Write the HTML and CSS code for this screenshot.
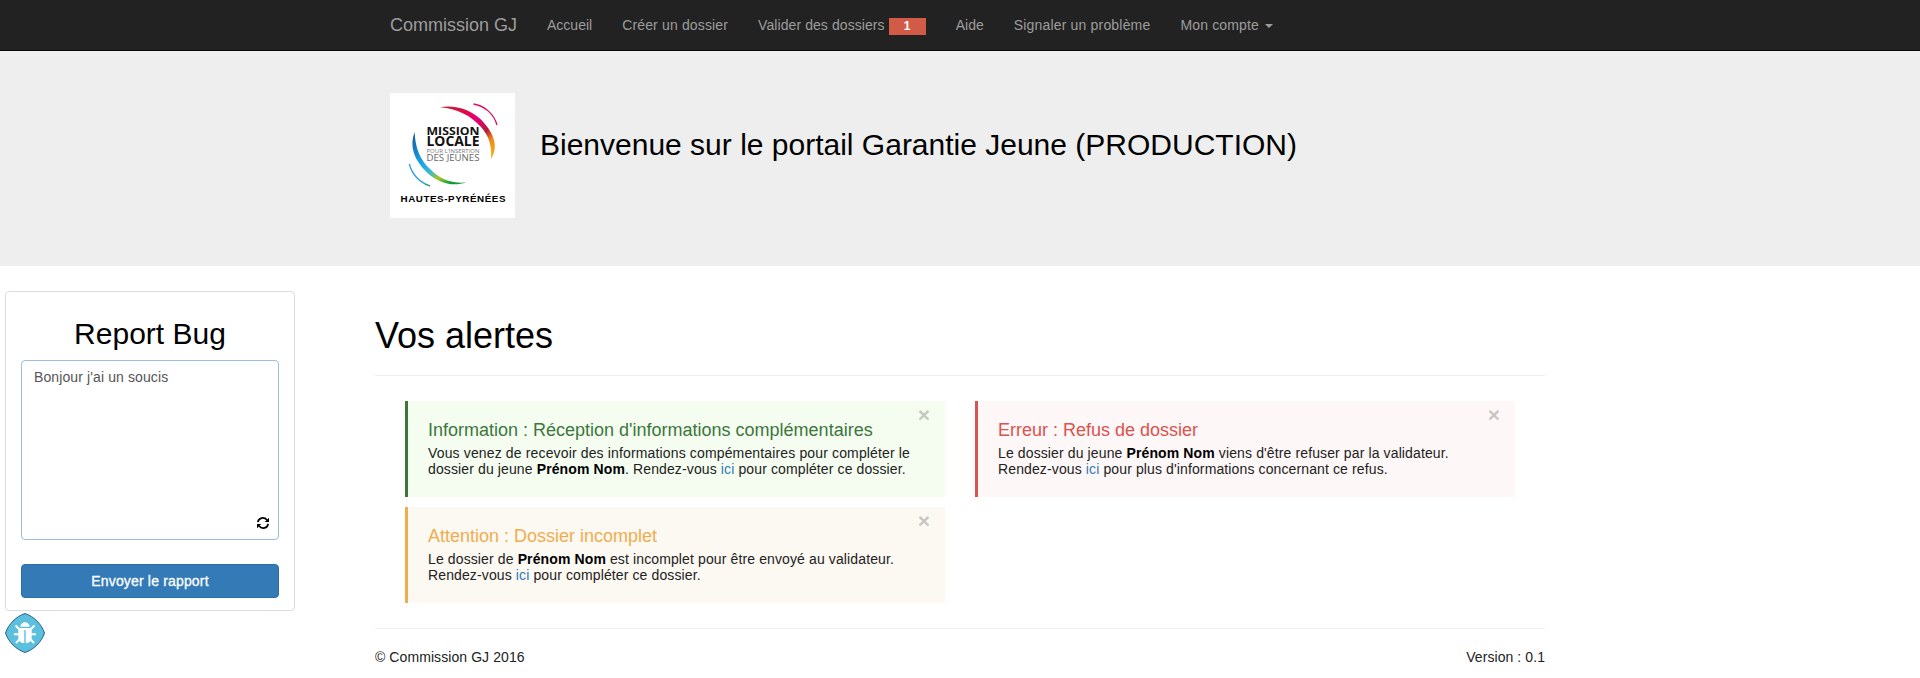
FILE: index.html
```html
<!DOCTYPE html>
<html lang="fr">
<head>
<meta charset="utf-8">
<title>Commission GJ</title>
<link rel="stylesheet" href="styles.css">
</head>
<body>
<nav class="navbar">
  <div class="navbar-inner">
    <a class="brand">Commission GJ</a>
    <a class="nav-link">Accueil</a>
    <a class="nav-link nav-create">Créer un dossier</a>
    <a class="nav-link nav-with-badge">Valider des dossiers <span class="badge">1</span></a>
    <a class="nav-link">Aide</a>
    <a class="nav-link nav-report">Signaler un problème</a>
    <a class="nav-link nav-account">Mon compte <span class="caret"></span></a>
  </div>
</nav>
<header class="jumbotron">
  <div class="jumbotron-inner">
    <svg class="logo" viewBox="0 0 125 125">
      <defs>
        <linearGradient id="warm" gradientUnits="userSpaceOnUse" x1="55" y1="15" x2="103" y2="66">
          <stop offset="0" stop-color="#c5203c"/><stop offset=".25" stop-color="#df0a48"/>
          <stop offset=".42" stop-color="#e5007d"/><stop offset=".64" stop-color="#b61a3c"/>
          <stop offset=".78" stop-color="#f08a18"/><stop offset="1" stop-color="#f6b40e"/>
        </linearGradient>
        <linearGradient id="cool" gradientUnits="userSpaceOnUse" x1="22" y1="45" x2="75" y2="92">
          <stop offset="0" stop-color="#1760a8"/><stop offset=".3" stop-color="#16a0e0"/>
          <stop offset=".5" stop-color="#35b7dc"/><stop offset=".66" stop-color="#a4c520"/>
          <stop offset=".82" stop-color="#0ba03c"/><stop offset="1" stop-color="#188a35"/>
        </linearGradient>
      </defs>
      <rect width="125" height="125" fill="#fff"/>
      <path fill="url(#warm)" d="M50 14.200 C66 11.500 81 17 91 26.500 C102 38 110 52 101 66 C102 55 100 44 91 34 C80 22 67 15.500 50 14.200Z"/>
      <path d="M83.500 11 C95 13 104 21 107 32" fill="none" stroke="#dc0c62" stroke-width="1.300"/>
      <path fill="url(#cool)" d="M24.700 39 C25 54 30 67 40 76 C50 86 60 90.500 76 89.500 C62 94 48 90 37 79.500 C24 67 19 53 24.700 39Z"/>
      <path d="M19.300 71 C22 81 29 89 40 93" fill="none" stroke="#279fe2" stroke-width="1.300"/>
      <path d="M35 91 L40 93" fill="none" stroke="#39a34c" stroke-width="1.300"/>
      <g font-family="Open Sans, sans-serif">
        <text x="36.500" y="42" font-size="11" font-weight="700" textLength="53" lengthAdjust="spacingAndGlyphs" fill="#111">MISSION</text>
        <text x="36.500" y="53.300" font-size="13.500" font-weight="700" textLength="53" lengthAdjust="spacingAndGlyphs" fill="#111">LOCALE</text>
        <text x="36.500" y="59.500" font-size="5.500" textLength="53" lengthAdjust="spacingAndGlyphs" fill="#777">POUR L'INSERTION</text>
        <text x="36.500" y="67.500" font-size="9" textLength="53" lengthAdjust="spacingAndGlyphs" fill="#666">DES JEUNES</text>
      </g>
      <text x="10.500" y="109" font-family="Liberation Sans, sans-serif" font-size="9.800" font-weight="700" textLength="105" lengthAdjust="spacing" fill="#000">HAUTES-PYRÉNÉES</text>
    </svg>
    <h2 class="welcome">Bienvenue sur le portail Garantie Jeune (PRODUCTION)</h2>
  </div>
</header>
<div class="page">
  <aside class="sidebar">
    <section class="bug-panel">
      <h2 class="bug-title">Report Bug</h2>
      <div class="bug-text">
        <span>Bonjour j'ai un soucis</span>
        <svg class="refresh" viewBox="0 0 12 12">
          <g fill="none" stroke="#000" stroke-width="1.700">
            <path d="M.9 5.200 C1.400 0.800 7 -.6 10 3"/>
            <path d="M11.100 6.800 C10.600 11.200 5 12.600 2 9"/>
          </g>
          <path d="M12 .7V5H7.700Z M0 11.300V7H4.300Z"/>
        </svg>
      </div>
      <button class="bug-send">Envoyer le rapport</button>
    </section>
    <svg class="bug-toggle" viewBox="0 0 40 40">
      <path d="M20 .5 C29 3.500 36.500 11 39.500 20 C36.500 29 29 36.500 20 39.500 C11 36.500 3.500 29 .5 20 C3.500 11 11 3.500 20 .5Z" fill="#5bc0de" stroke="#286090"/>
      <path d="M15.300 13.800 C15.600 7.600 24.400 7.600 24.700 13.800Z M13.300 14.900H26.700V24 C26.700 28 24.500 30 20.700 30.200V17H19.300V30.200C15.500 30 13.300 28 13.300 24Z" fill="#fff"/>
      <path d="M10.500 12.500 L14 16 M29.500 12.500 L26 16 M9 21.200H14 M31 21.200H26 M11 30 L14.700 26 M29 30 L25.300 26" stroke="#fff" stroke-width="1.900" fill="none"/>
    </svg>
  </aside>
  <main class="content">
    <h1 class="heading">Vos alertes</h1>
    <div class="alerts">
      <article class="alert success">
        <span class="close">×</span>
        <h4>Information : Réception d'informations complémentaires</h4>
        <p><span class="loose">Vous venez de recevoir des informations compémentaires pour compléter le</span><br>dossier du jeune <b>Prénom Nom</b>. Rendez-vous <a>ici</a> pour compléter ce dossier.</p>
      </article>
      <article class="alert danger">
        <span class="close">×</span>
        <h4>Erreur : Refus de dossier</h4>
        <p>Le dossier du jeune <b>Prénom Nom</b> viens d'être refuser par la validateur.<br>Rendez-vous <a>ici</a> pour plus d'informations concernant ce refus.</p>
      </article>
      <article class="alert warning">
        <span class="close">×</span>
        <h4>Attention : Dossier incomplet</h4>
        <p>Le dossier de <b>Prénom Nom</b> est incomplet pour être envoyé au validateur.<br>Rendez-vous <a>ici</a> pour compléter ce dossier.</p>
      </article>
    </div>
    <footer class="footer"><span>© Commission GJ 2016</span><span>Version : 0.1</span></footer>
  </main>
</div>
</body>
</html>
```
FILE: styles.css
```css
* { box-sizing: border-box; }
body {
  margin: 0;
  height: 678px;
  overflow: hidden;
  background: #fff;
  color: #222;
  font: 14px/16px "Liberation Sans", Arial, sans-serif;
}
h1, h2, h4, p { margin: 0; font-weight: 400; }
.navbar { height: 51px; background: #222; border-bottom: 1px solid #080808; }
.navbar-inner { display: flex; width: 1170px; margin: 0 auto; }
.brand, .nav-link { padding: 15px; color: #9d9d9d; line-height: 20px; white-space: nowrap; }
.brand { font-size: 18px; }
.nav-create { letter-spacing: .15px; }
.nav-with-badge { display: flex; gap: 4px; letter-spacing: .08px; }
.nav-report { letter-spacing: .18px; }
.nav-account { letter-spacing: .15px; }
.badge {
  width: 37px;
  height: 17px;
  margin-top: 3px;
  background: #d15b47;
  color: #fff;
  font-size: 12px;
  font-weight: 700;
  line-height: 16px;
  text-align: center;
}
.caret {
  display: inline-block;
  margin-left: 2px;
  vertical-align: middle;
  border-top: 4px solid #9d9d9d;
  border-left: 4px solid transparent;
  border-right: 4px solid transparent;
}
.jumbotron { height: 215px; padding-top: 42px; background: #eee; }
.jumbotron-inner { display: flex; gap: 25px; width: 1140px; margin: 0 auto; }
.logo { width: 125px; height: 125px; }
.welcome { padding-top: 35px; font-size: 30px; line-height: 33px; color: #000; white-space: nowrap; }
.page { display: grid; grid-template-columns: 375px 1170px; }
.sidebar { padding: 25px 0 0 5px; }
.bug-panel {
  width: 290px;
  height: 320px;
  padding: 25px 15px 0;
  border: 1px solid #ddd;
  border-radius: 4px;
}
.bug-title { font-size: 30px; line-height: 33px; text-align: center; color: #000; }
.bug-text {
  display: flex;
  flex-direction: column;
  justify-content: space-between;
  height: 180px;
  margin-top: 10px;
  padding: 8px 9px 10px 12px;
  border: 1px solid #9bbfdd;
  border-radius: 4px;
  color: #555;
  letter-spacing: .11px;
}
.refresh { width: 12px; height: 12px; align-self: flex-end; }
.bug-send {
  display: block;
  width: 100%;
  height: 34px;
  margin-top: 24px;
  padding: 0;
  border: 1px solid #2e6da4;
  border-radius: 4px;
  background: #337ab7;
  color: #fff;
  font: 14px/20px "Liberation Sans", Arial, sans-serif;
  letter-spacing: .17px;
  -webkit-text-stroke: .3px #fff;
}
.bug-toggle { display: block; width: 40px; height: 40px; margin-top: 2px; }
.heading { height: 110px; padding-top: 50px; border-bottom: 1px solid #eee; font-size: 36px; line-height: 40px; color: #000; }
.alerts { display: grid; grid-template-columns: 540px 540px; gap: 10px 30px; padding: 25px 30px; }
.alert { position: relative; height: 96px; padding: 19px 0 0 20px; border-left: 3px solid; white-space: nowrap; }
.alert h4 { font-size: 18px; line-height: 20px; margin-bottom: 5px; }
.alert p { color: #222; letter-spacing: .12px; }
.alert .loose { letter-spacing: .145px; }
.alert b { color: #000; }
.alert a { color: #337ab7; }
.close { position: absolute; top: 3px; right: 15px; font-size: 21px; line-height: 21px; font-weight: 700; color: #000; opacity: .2; }
.success { background: #f4fdf0; color: #3c763d; }
.danger { background: #fdf7f7; color: #d9534f; }
.warning { background: #fcf8f2; color: #f0ad4e; }
.footer { display: flex; justify-content: space-between; padding-top: 20px; border-top: 1px solid #eee; letter-spacing: .08px; }
```
